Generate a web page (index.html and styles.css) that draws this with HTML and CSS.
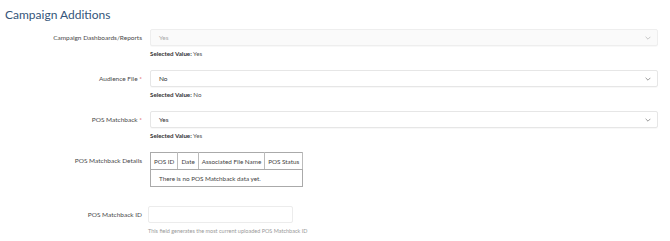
FILE: index.html
```html
<!DOCTYPE html>
<html lang="en">
<head>
  <meta charset="UTF-8">
  <title>Campaign Additions</title>
  <link rel="stylesheet" href="styles.css">
</head>
<body>
  <div class="page">
    <h1>Campaign Additions</h1>

    <div class="form-row">
      <label class="field-label">Campaign Dashboards/Reports</label>
      <div class="field">
        <div class="select disabled">
          <span>Yes</span>
          <svg class="caret" viewBox="0 0 10 6"><path d="M1 1l4 4 4-4" /></svg>
        </div>
        <div class="selected"><b>Selected Value:</b> Yes</div>
      </div>
    </div>

    <div class="form-row">
      <label class="field-label">Audience File <span class="req">*</span></label>
      <div class="field">
        <div class="select">
          <span>No</span>
          <svg class="caret" viewBox="0 0 10 6"><path d="M1 1l4 4 4-4" /></svg>
        </div>
        <div class="selected"><b>Selected Value:</b> No</div>
      </div>
    </div>

    <div class="form-row">
      <label class="field-label">POS Matchback <span class="req">*</span></label>
      <div class="field">
        <div class="select">
          <span>Yes</span>
          <svg class="caret" viewBox="0 0 10 6"><path d="M1 1l4 4 4-4" /></svg>
        </div>
        <div class="selected"><b>Selected Value:</b> Yes</div>
      </div>
    </div>

    <div class="form-row details-row">
      <label class="field-label">POS Matchback Details</label>
      <div class="field">
        <table class="pos-table">
          <thead>
            <tr>
              <th>POS ID</th>
              <th>Date</th>
              <th>Associated File Name</th>
              <th>POS Status</th>
            </tr>
          </thead>
          <tbody>
            <tr>
              <td colspan="4">There is no POS Matchback data yet.</td>
            </tr>
          </tbody>
        </table>
      </div>
    </div>

    <div class="form-row id-row">
      <label class="field-label">POS Matchback ID</label>
      <div class="field">
        <div class="text-input"></div>
        <div class="help">This field generates the most current uploaded POS Matchback ID</div>
      </div>
    </div>
  </div>
</body>
</html>
```

FILE: styles.css
```css
* {
  margin: 0;
  padding: 0;
  box-sizing: border-box;
}

body {
  font-family: Lato, "Open Sans", sans-serif;
  background: #fff;
  color: #4a4a4a;
  font-size: 6.5px;
}

.page {
  padding: 7px 12px 0 5px;
}

h1 {
  font-size: 12px;
  font-weight: 400;
  color: #34557a;
  margin-bottom: 6px;
  line-height: 16px;
}

.form-row {
  display: flex;
  margin-bottom: 12px;
}

.field-label {
  width: 137px;
  flex-shrink: 0;
  text-align: right;
  padding-top: 5px;
  color: #4a4a4a;
  line-height: 8px;
  margin-right: 8px;
}

.req {
  color: #d9534f;
}

.field {
  flex: 1;
}

.select {
  height: 17px;
  border: 1px solid #e6e6e6;
  border-radius: 2px;
  display: flex;
  align-items: center;
  justify-content: space-between;
  padding: 0 6px 0 8px;
  color: #333;
  box-shadow: 0 1px 1px rgba(0, 0, 0, 0.03);
}

.select.disabled {
  background: #fafafa;
  color: #aaa;
  border-color: #eee;
}

.caret {
  width: 6px;
  height: 4px;
  fill: none;
  stroke: #888;
  stroke-width: 1.4;
}

.disabled .caret {
  stroke: #bbb;
}

.selected {
  margin-top: 4px;
  color: #555;
  line-height: 8px;
  font-size: 6.2px;
}

.selected b {
  font-weight: 700;
  color: #333;
}

.details-row {
  margin-top: 11px;
  margin-bottom: 19px;
}

.pos-table {
  border-collapse: collapse;
  border: 1px solid #aaa;
  color: #444;
  font-size: 6.3px;
}

.pos-table th {
  font-weight: 400;
  height: 17px;
  padding: 0 3px;
  border-right: 1px solid #bbb;
  border-bottom: 1px solid #aaa;
  text-align: left;
}

.pos-table td {
  height: 17px;
  padding: 0 8px;
}

.id-row .field {
  margin-left: -2px;
}

.text-input {
  width: 145px;
  height: 17px;
  border: 1px solid #ececec;
  border-radius: 2px;
}

.help {
  margin-top: 4px;
  font-size: 5.5px;
  color: #999;
  line-height: 8px;
}
```
